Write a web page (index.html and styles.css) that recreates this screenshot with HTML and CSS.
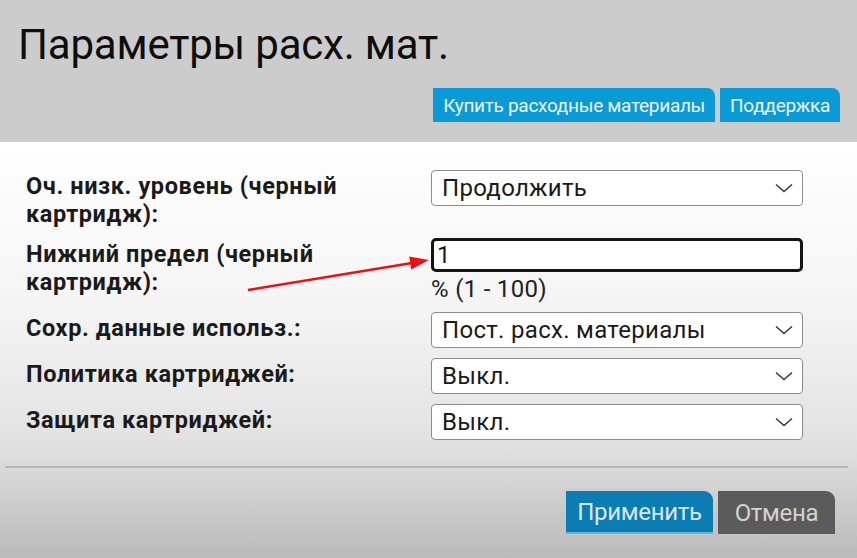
FILE: index.html
```html
<!DOCTYPE html>
<html lang="ru">
<head>
<meta charset="utf-8">
<title>Параметры расх. мат.</title>
<link rel="stylesheet" href="styles.css">
</head>
<body>
<div class="page">
  <header class="header">
    <h1 class="title">Параметры расх. мат.</h1>
    <div class="header-actions">
      <button class="tab-btn">Купить расходные материалы</button>
      <button class="tab-btn">Поддержка</button>
    </div>
  </header>

  <main class="content">
    <div class="form">
      <div class="row">
        <div class="label">Оч. низк. уровень (черный картридж):</div>
        <div class="control">
          <div class="select"><span>Продолжить</span><svg class="chev" viewBox="0 0 18 10" width="18" height="10"><path d="M1 1.5 L9 8.5 L17 1.5" fill="none" stroke="#333" stroke-width="1.4"/></svg></div>
        </div>
      </div>
      <div class="row">
        <div class="label">Нижний предел (черный картридж):</div>
        <div class="control">
          <div class="input">1</div>
          <div class="hint">% (1 - 100)</div>
        </div>
      </div>
      <div class="row">
        <div class="label">Сохр. данные использ.:</div>
        <div class="control">
          <div class="select"><span>Пост. расх. материалы</span><svg class="chev" viewBox="0 0 18 10" width="18" height="10"><path d="M1 1.5 L9 8.5 L17 1.5" fill="none" stroke="#333" stroke-width="1.4"/></svg></div>
        </div>
      </div>
      <div class="row">
        <div class="label">Политика картриджей:</div>
        <div class="control">
          <div class="select"><span>Выкл.</span><svg class="chev" viewBox="0 0 18 10" width="18" height="10"><path d="M1 1.5 L9 8.5 L17 1.5" fill="none" stroke="#333" stroke-width="1.4"/></svg></div>
        </div>
      </div>
      <div class="row">
        <div class="label">Защита картриджей:</div>
        <div class="control">
          <div class="select"><span>Выкл.</span><svg class="chev" viewBox="0 0 18 10" width="18" height="10"><path d="M1 1.5 L9 8.5 L17 1.5" fill="none" stroke="#333" stroke-width="1.4"/></svg></div>
        </div>
      </div>
    </div>

    <hr class="divider">

    <div class="footer">
      <button class="btn btn-apply">Применить</button>
      <button class="btn btn-cancel">Отмена</button>
    </div>
  </main>

  <svg class="annotation" width="857" height="558" viewBox="0 0 857 558">
    <line x1="248" y1="290" x2="412" y2="263" stroke="#e81212" stroke-width="2.5"/>
    <polygon points="429,260 411.2,269.5 409.2,256.5" fill="#e81212"/>
  </svg>
</div>
</body>
</html>
```

FILE: styles.css
```css
* { box-sizing: border-box; }

html, body {
  margin: 0;
  padding: 0;
  height: 100%;
}

body {
  font-family: Roboto, "Noto Sans", "Liberation Sans", sans-serif;
  color: #111;
}

.page {
  position: relative;
  width: 857px;
  height: 558px;
  display: flex;
  flex-direction: column;
  overflow: hidden;
}

.header {
  height: 142px;
  background: #cdcccd;
  padding: 20px 17px 20px 18px;
  display: flex;
  flex-direction: column;
}

.title {
  margin: 0;
  font-size: 42px;
  font-weight: 400;
  line-height: 50px;
  color: #0d0d0d;
  letter-spacing: -0.2px;
}

.header-actions {
  margin-top: auto;
  display: flex;
  justify-content: flex-end;
  gap: 5px;
}

.tab-btn {
  height: 34px;
  border: none;
  border-radius: 0 8px 0 0;
  background: #0a9ad5;
  color: #eef6fb;
  font-family: Roboto, "Liberation Sans", sans-serif;
  font-size: 19px;
  padding: 0 10px;
  letter-spacing: -0.3px;
}

.content {
  flex: 1;
  background: linear-gradient(to bottom, #ffffff 0%, #f4f4f4 40%, #e2e2e2 72%, #bababa 100%);
  padding-top: 28px;
  display: flex;
  flex-direction: column;
}

.form {
  padding-left: 26px;
  display: flex;
  flex-direction: column;
  gap: 10px;
}

.row {
  display: flex;
  align-items: flex-start;
}

.label {
  width: 405px;
  padding-right: 30px;
  font-size: 23.5px;
  font-weight: 700;
  line-height: 28px;
  letter-spacing: 0.6px;
  padding-top: 2px;
  color: #1a1a1a;
}

.control {
  width: 372px;
}

.select {
  height: 36px;
  border: 1px solid #8c8c8c;
  border-radius: 4px;
  background: #fff;
  display: flex;
  align-items: center;
  justify-content: space-between;
  padding: 0 9px 0 10px;
  font-size: 24px;
  letter-spacing: 0.3px;
  color: #1a1a1a;
}

.chev {
  display: block;
}

.input {
  height: 34px;
  border: 3px solid #141414;
  border-radius: 5px;
  background: #fff;
  padding-left: 3px;
  font-size: 24px;
  line-height: 28px;
  color: #1a1a1a;
}

.hint {
  margin-top: 4px;
  font-size: 24px;
  line-height: 26px;
  letter-spacing: 0.3px;
  color: #222;
}

.divider {
  margin: 26px 9px 0 5px;
  border: none;
  border-top: 2px solid #b7b7b7;
  height: 0;
}

.footer {
  margin-top: 23px;
  padding-right: 22px;
  display: flex;
  justify-content: flex-end;
  gap: 5px;
}

.btn {
  height: 43px;
  border: none;
  border-radius: 0 9px 0 0;
  font-family: Roboto, "Liberation Sans", sans-serif;
  font-size: 24px;
  letter-spacing: -0.3px;
}

.btn-apply {
  width: 147px;
  background: #0b7db2;
  color: #d6e9f1;
  border-bottom: 2px solid #5fb6d6;
}

.btn-cancel {
  width: 117px;
  background: #5b5b5b;
  color: #d2d2d2;
}

.annotation {
  position: absolute;
  left: 0;
  top: 0;
  pointer-events: none;
}
```
